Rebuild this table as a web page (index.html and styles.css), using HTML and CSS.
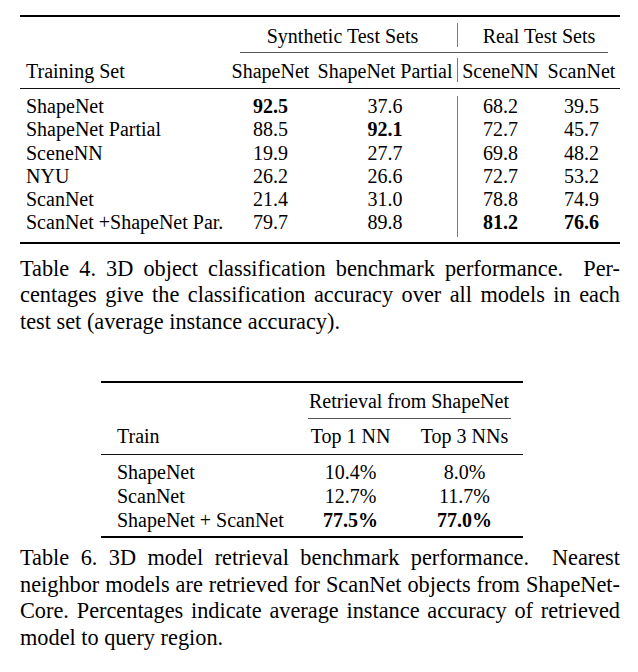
FILE: index.html
```html
<!DOCTYPE html>
<html lang="en">
<head>
<meta charset="utf-8">
<title>Benchmark tables</title>
<link rel="stylesheet" href="styles.css">
</head>
<body>
<div class="page">
  <div class="tbl tbl4">
    <div class="rule rule-heavy"></div>
    <div class="row head1">
      <div class="cell"></div>
      <div class="cell c span2">Synthetic Test Sets</div>
      <div class="bar"></div>
      <div class="cell c span2">Real Test Sets</div>
    </div>
    <div class="row cmid-row">
      <div class="cmid"></div>
    </div>
    <div class="row head2">
      <div class="cell l">Training Set</div>
      <div class="cell c">ShapeNet</div>
      <div class="cell c">ShapeNet Partial</div>
      <div class="bar"></div>
      <div class="cell c">SceneNN</div>
      <div class="cell c">ScanNet</div>
    </div>
    <div class="rule rule-mid"></div>
    <div class="row body">
      <div class="bar bar-body"></div>
      <div class="cell l">ShapeNet</div><div class="cell c b">92.5</div><div class="cell c">37.6</div><div class="cell c">68.2</div><div class="cell c">39.5</div>
      <div class="cell l">ShapeNet Partial</div><div class="cell c">88.5</div><div class="cell c b">92.1</div><div class="cell c">72.7</div><div class="cell c">45.7</div>
      <div class="cell l">SceneNN</div><div class="cell c">19.9</div><div class="cell c">27.7</div><div class="cell c">69.8</div><div class="cell c">48.2</div>
      <div class="cell l">NYU</div><div class="cell c">26.2</div><div class="cell c">26.6</div><div class="cell c">72.7</div><div class="cell c">53.2</div>
      <div class="cell l">ScanNet</div><div class="cell c">21.4</div><div class="cell c">31.0</div><div class="cell c">78.8</div><div class="cell c">74.9</div>
      <div class="cell l">ScanNet +ShapeNet Par.</div><div class="cell c">79.7</div><div class="cell c">89.8</div><div class="cell c b">81.2</div><div class="cell c b">76.6</div>
    </div>
    <div class="rule rule-heavy"></div>
  </div>

  <p class="caption cap4">
    <span class="ln">Table 4. 3D object classification benchmark performance. &nbsp;Per-</span>
    <span class="ln">centages give the classification accuracy over all models in each</span>
    <span class="ln last">test set (average instance accuracy).</span>
  </p>

  <div class="tbl tbl6">
    <div class="rule rule-heavy"></div>
    <div class="row head1">
      <div class="cell"></div>
      <div class="cell c span2">Retrieval from ShapeNet</div>
    </div>
    <div class="row cmid-row">
      <div class="cmid"></div>
    </div>
    <div class="row head2">
      <div class="cell l">Train</div>
      <div class="cell c">Top 1 NN</div>
      <div class="cell c">Top 3 NNs</div>
    </div>
    <div class="rule rule-mid"></div>
    <div class="row body">
      <div class="cell l">ShapeNet</div><div class="cell c">10.4%</div><div class="cell c">8.0%</div>
      <div class="cell l">ScanNet</div><div class="cell c">12.7%</div><div class="cell c">11.7%</div>
      <div class="cell l">ShapeNet + ScanNet</div><div class="cell c b">77.5%</div><div class="cell c b">77.0%</div>
    </div>
    <div class="rule rule-heavy"></div>
  </div>

  <p class="caption cap6">
    <span class="ln">Table 6. 3D model retrieval benchmark performance. &nbsp;Nearest</span>
    <span class="ln">neighbor models are retrieved for ScanNet objects from ShapeNet-</span>
    <span class="ln">Core. Percentages indicate average instance accuracy of retrieved</span>
    <span class="ln last">model to query region.</span>
  </p>
</div>
</body>
</html>
```
FILE: styles.css
```css
html, body {
  margin: 0;
  padding: 0;
  background: #ffffff;
}

body {
  font-family: "Liberation Serif", "Times New Roman", serif;
  color: #000000;
}

.page {
  width: 600px;
  margin-left: 20px;
  padding-top: 15px;
}

/* ---------- tables ---------- */
.tbl {
  font-size: 20px;
}

.rule {
  background: #000000;
}

.rule-heavy {
  height: 2px;
}

.rule-mid {
  height: 1px;
  background: #111111;
}

.row {
  display: grid;
}

.tbl4 .row {
  grid-template-columns: 208px 85px 144px 1px 85px 77px;
}

.tbl6 .row {
  grid-template-columns: 194px 111px 117px;
}

.cell {
  white-space: nowrap;
}

.cell.l {
  padding-left: 6px;
  text-align: left;
}

.tbl6 .cell.l {
  padding-left: 16px;
}

.cell.c {
  text-align: center;
}

.cell.b {
  font-weight: bold;
}

.span2 {
  grid-column: span 2;
}

.head1,
.head2 {
  height: 35px;
  line-height: 23px;
}

.tbl4 .head1 .cell {
  padding-top: 8px;
}

.tbl4 .head2 .cell {
  padding-top: 7px;
}

.tbl6 .head1 .cell {
  padding-top: 7px;
}

.tbl6 .head2 .cell {
  padding-top: 6px;
}

.bar {
  background: #7a7a7a;
  width: 1px;
}

.tbl4 .head1 .bar {
  margin: 6px 0 5px;
}

.tbl4 .head2 .bar {
  margin: 5px 0 6px;
}

.cmid-row {
  height: 1px;
}

.cmid {
  height: 1px;
  background: #555555;
}

.tbl4 .cmid {
  grid-column: 2 / 7;
  margin: 0 12px;
}

.tbl6 .cmid {
  grid-column: 2 / 4;
  margin: 0 12px 0 13px;
}

.body {
  line-height: 23.3px;
}

.tbl4 .body {
  padding: 6px 0 7px;
}

.tbl4 .bar-body {
  grid-column: 4;
  grid-row: 1 / 7;
  margin: 1px 0 -2px;
}

.tbl6 {
  width: 422px;
  margin-left: 81px;
  margin-top: 45px;
}

.tbl6 .body {
  line-height: 24px;
  padding: 5px 0 4px;
}

/* ---------- captions ---------- */
.caption {
  margin: 0;
  font-size: 22.3px;
  line-height: 26.7px;
}

.cap4 {
  margin-top: 12px;
}

.cap6 {
  margin-top: 7px;
}

.ln {
  display: block;
  text-align: justify;
  text-align-last: justify;
  white-space: nowrap;
}

.ln.last {
  text-align-last: left;
}
```
